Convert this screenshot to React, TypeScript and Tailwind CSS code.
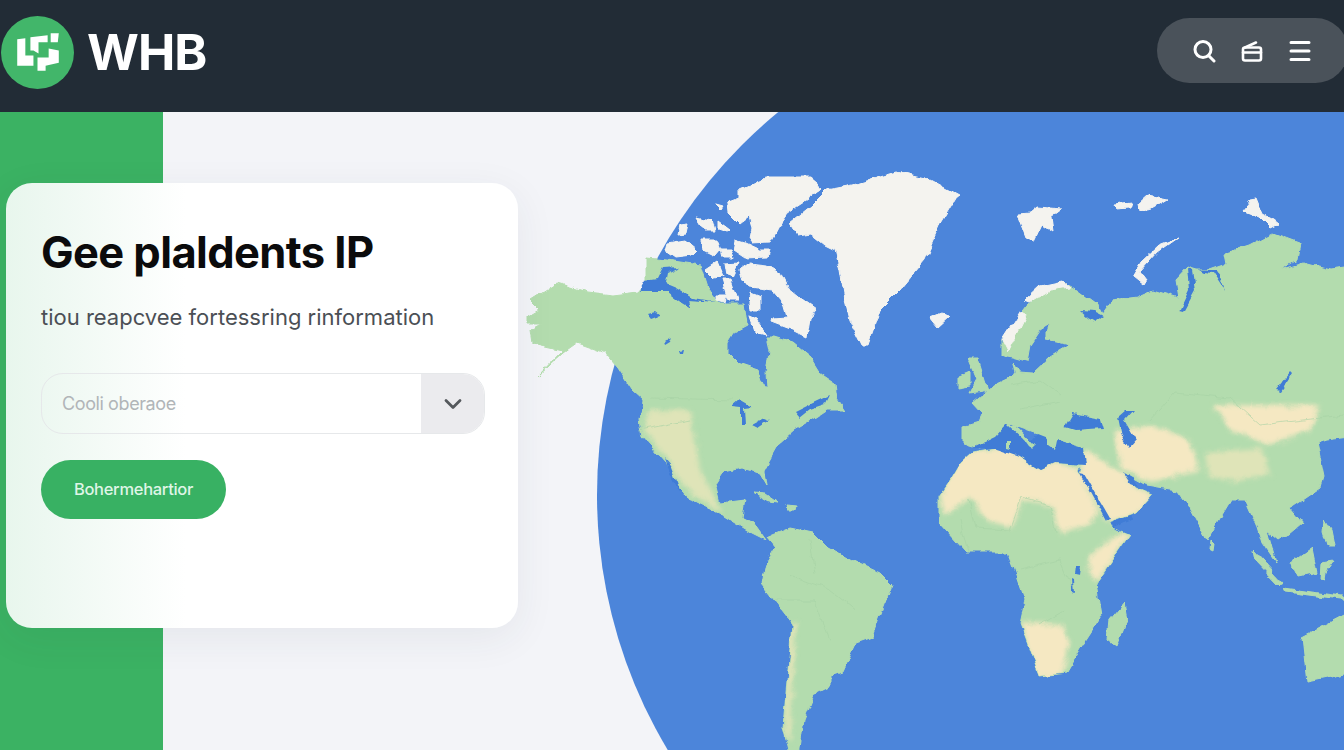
import { ChevronDown } from "lucide-react";

// map shapes use page coordinates, the svg viewBox starts at the hero top
const greenLand = [
  // north america
  "M530,300 L557,283 587,292 613,295 637,292 647,280 647,258 667,260 700,265 707,287 720,303 745,303 748,325 733,333 727,343 727,353 737,363 758,370 762,383 768,388 767,373 770,350 767,337 773,337 793,343 810,357 820,373 835,383 837,398 845,410 827,410 815,418 795,430 778,445 764,470 766,485 759,473 742,468 723,472 716,483 721,503 745,500 742,517 754,523 766,540 752,533 723,515 697,503 681,492 666,463 643,437 640,420 643,400 632,390 617,367 605,353 577,343 563,353 537,377 563,350 532,343 530,330 543,323 528,323 528,317 540,310 Z",
  // eurasia
  "M1002,340 L1027,307 1040,292 1063,282 1077,290 1100,307 1103,313 1112,300 1137,297 1153,290 1178,298 1175,280 1187,267 1197,270 1207,270 1227,263 1225,253 1250,245 1273,233 1300,243 1297,260 1280,270 1303,263 1330,270 1350,267 1350,437 1326,440 1317,443 1324,477 1321,487 1302,500 1290,508 1302,523 1290,533 1279,540 1267,530 1276,563 1262,543 1257,527 1245,500 1231,500 1207,540 1189,507 1177,490 1146,485 1122,472 1136,488 1153,495 1136,513 1108,523 1079,475 1084,450 1063,448 1037,433 1008,423 994,438 980,448 963,443 963,427 980,422 982,413 972,402 993,385 1010,377 1015,373 1013,363 1018,372 1033,373 1050,357 1070,345 1047,340 1047,333 1052,317 1060,318 1040,330 1030,345 1027,362 1013,358 1007,357 1002,355 Z",
  // africa
  "M973,452 L994,448 1013,448 1020,457 1041,470 1056,463 1084,465 1077,470 1110,527 1129,535 1096,583 1101,617 1084,643 1067,672 1039,675 1020,623 1025,600 1015,570 1008,552 965,552 939,523 939,497 951,480 961,463 Z",
  // south america
  "M790,528 L814,533 828,547 852,560 880,573 892,585 880,617 873,637 856,643 842,673 830,677 830,687 814,695 804,720 799,755 790,755 783,727 792,623 761,583 764,567 776,547 768,537 Z",
  // uk and ireland
  "M968,358 L978,358 988,390 970,393 977,380 Z",
  "M958,377 L970,372 970,385 958,387 Z",
  // madagascar, australia, sri lanka
  "M1124,603 L1127,620 1117,647 1108,640 1110,620 Z",
  "M1350,612 L1302,637 1307,682 1350,673 Z",
  "M1210,540 L1214,544 1213,551 1209,549 Z",
  // indonesia and philippines
  "M1253,550 L1283,583 1279,585 1255,560 Z",
  "M1283,588 L1350,597 1350,600 1285,592 Z",
  "M1312,548 L1291,563 1298,577 1317,573 Z",
  "M1322,563 L1334,561 1326,572 1325,582 1321,580 Z",
  "M1325,520 L1331,530 1334,545 1328,545 1324,532 Z",
  // cuba and hispaniola
  "M754,493 L765,494 778,503 770,502 Z",
  "M785,504 L797,505 796,509 786,509 Z",
];

const whiteLand = [
  // greenland
  "M790,223 L810,207 827,190 853,185 897,172 930,180 958,195 940,225 925,260 900,290 880,310 868,345 862,345 850,320 845,300 840,270 835,250 825,245 810,233 797,235 Z",
  // canadian arctic
  "M740,190 L767,178 810,178 822,188 807,200 787,213 780,223 770,242 750,243 753,227 750,217 740,225 728,213 727,203 740,198 Z",
  "M697,217 L712,220 715,230 705,230 Z",
  "M718,221 L730,230 727,231 718,228 Z",
  "M715,205 L722,207 720,210 Z",
  "M680,225 L688,224 686,233 678,234 Z",
  "M667,243 L685,240 697,250 692,255 675,257 665,250 Z",
  "M702,240 L716,240 720,250 715,256 703,250 Z",
  "M720,250 L730,250 733,257 722,257 Z",
  "M735,240 L745,243 760,250 770,250 768,257 745,258 733,250 Z",
  "M740,270 L750,263 767,265 780,273 787,287 803,300 817,310 810,318 807,337 793,330 772,322 773,318 787,317 783,303 772,290 750,287 742,277 Z",
  "M705,270 L717,262 723,277 713,278 Z",
  "M725,263 L740,262 733,277 727,275 Z",
  "M722,280 L730,280 737,300 728,300 Z",
  "M750,317 L757,320 767,335 755,332 Z",
  "M717,295 L727,295 725,302 717,300 Z",
  "M750,293 L760,297 760,310 752,310 Z",
  // iceland
  "M930,318 L943,313 949,318 938,328 Z",
  // svalbard
  "M1018,214 L1030,213 1037,207 1062,209 1050,218 1052,232 1042,225 1035,240 1027,238 Z",
  // franz josef land
  "M1113,205 L1132,203 1130,209 1116,210 Z",
  "M1138,204 L1148,195 1168,199 1155,207 1148,211 1139,209 Z",
  // severnaya zemlya
  "M1250,199 L1256,198 1263,215 1273,220 1278,224 1270,228 1260,218 1241,210 Z",
  // novaya zemlya
  "M1178,238 L1160,245 1142,262 1133,277 1143,285 1146,280 1140,272 1158,252 Z",
  // north norway edge
  "M1025,300 L1040,286 1063,281 1070,287 1050,290 1030,302 Z",
  "M1002,340 L1020,312 1026,315 1008,352 Z",
];

const blueWater = [
  // arctic bays
  "M638,292 L645,280 658,278 663,268 680,267 667,273 665,283 677,288 693,298 717,302 688,300 690,308 680,302 667,292 Z",
  // canadian lakes
  "M648,314 L655,312 660,316 652,319 Z",
  "M664,342 L672,337 670,342 665,345 Z",
  "M678,352 L684,351 683,355 679,355 Z",
  // great lakes
  "M732,407 L740,400 752,407 744,408 745,425 741,425 741,408 Z",
  "M752,425 L765,418 770,420 758,428 Z",
  // gulf of st lawrence
  "M795,412 L815,402 830,395 825,405 810,410 800,418 Z",
  // baja
  "M664,458 L670,465 680,492 678,490 668,470 Z",
  // mediterranean
  "M973,448 L994,438 1008,423 1020,432 1027,445 1037,433 1050,438 1084,448 1086,465 1056,463 1041,470 1020,457 994,448 Z",
  // black sea and caspian
  "M1065,427 L1073,413 1100,418 1103,428 1075,430 Z",
  "M1118,417 L1126,410 1133,410 1124,420 1136,440 1129,448 1122,437 Z",
  // red sea and persian gulf
  "M1079,472 L1083,473 1110,520 1106,521 Z",
  "M1110,524 L1130,516 1132,520 1113,528 Z",
  "M1122,472 L1134,480 1138,487 1130,484 Z",
  // white sea and ob
  "M1080,311 L1095,312 1103,316 1095,322 1088,318 Z",
  "M1188,268 L1193,270 1196,290 1184,312 1180,311 1190,290 Z",
  "M1199,270 L1217,270 1224,290 1213,273 1203,272 Z",
  // baikal
  "M1290,372 L1292,374 1280,392 1275,391 Z",
  // east african lakes
  "M1076,567 L1081,567 1080,575 1075,574 Z",
  "M1071,579 L1073,580 1074,595 1072,594 Z",
];

// land drawn back on top of the mediterranean
const overWater = [
  "M1008,425 L1015,425 1035,446 1031,450 1024,440 Z",
  "M1046,431 L1058,436 1055,450 1048,445 Z",
  "M1007,440 L1011,440 1011,450 1007,449 Z",
];

const tanLand = [
  "M940,495 L960,458 973,450 1012,447 1020,455 1041,468 1056,462 1078,468 1098,512 1090,524 1060,533 1052,505 1024,500 1012,527 985,520 972,497 945,516 Z",
  "M1085,450 L1122,472 1136,487 1155,496 1136,515 1109,524 1080,472 Z",
  "M1020,622 L1060,625 1070,640 1062,675 1036,678 Z",
  "M1090,555 L1118,534 1130,534 1098,580 1088,574 Z",
  "M1113,432 L1150,425 1190,440 1200,470 1150,482 1122,468 Z",
  "M1213,405 L1320,406 1310,430 1270,445 1230,430 Z",
];

const paleLand = [
  "M1205,452 L1262,448 1270,475 1232,482 1208,475 Z",
  "M650,410 L690,410 700,470 722,512 697,497 680,482 665,455 644,432 Z",
  "M787,622 L796,622 790,740 784,735 Z",
];

const borders = [
  "M1022,497 L1050,505 1056,533 M975,528 L1010,530 1022,497 M968,500 L975,528 M1020,570 L1060,560 1072,590 M1040,625 L1065,610 M960,520 L968,552",
  "M790,575 L830,590 855,610 M775,600 L815,600 830,640 M810,540 L815,575",
  "M1010,385 L1040,380 1060,395 M1020,410 L1060,402 M1150,420 L1175,392 1230,398 1260,425 1344,415",
  "M650,398 L735,400 M640,430 L690,420",
];

function WorldMap() {
  return (
    <svg viewBox="0 112 1344 638" className="absolute inset-0 h-full w-full" aria-hidden="true">
      <defs>
        <filter id="soft" x="-20%" y="-20%" width="140%" height="140%">
          <feGaussianBlur stdDeviation="2.5" />
        </filter>
        {/* roughens the straight polygon edges into something like a coastline */}
        <filter id="coast" filterUnits="userSpaceOnUse" x="0" y="112" width="1344" height="638">
          <feTurbulence type="fractalNoise" baseFrequency="0.07" numOctaves="3" seed="4" result="noise" />
          <feDisplacementMap in="SourceGraphic" in2="noise" scale="7" xChannelSelector="R" yChannelSelector="G" />
          <feGaussianBlur stdDeviation="0.45" />
        </filter>
        <clipPath id="land">
          {greenLand.map((d) => (
            <path key={d} d={d} />
          ))}
        </clipPath>
      </defs>
      <circle cx="1092" cy="495" r="495" fill="#4c85da" />
      <g filter="url(#coast)">
        {greenLand.map((d) => (
          <path key={d} d={d} fill="#b3dcae" stroke="#b3dcae" strokeWidth="1" strokeLinejoin="round" />
        ))}
        <g clipPath="url(#land)">
          <g filter="url(#soft)" fill="#f5e8c2">
            {tanLand.map((d) => (
              <path key={d} d={d} />
            ))}
          </g>
          <g filter="url(#soft)" fill="#dfe4b8">
            {paleLand.map((d) => (
              <path key={d} d={d} />
            ))}
          </g>
        </g>
        {borders.map((d) => (
          <path key={d} d={d} fill="none" stroke="#a6d2a4" strokeWidth="0.6" />
        ))}
        {blueWater.map((d) => (
          <path key={d} d={d} fill="#3f7cd6" />
        ))}
        {overWater.map((d) => (
          <path key={d} d={d} fill="#b3dcae" />
        ))}
        {whiteLand.map((d) => (
          <path key={d} d={d} fill="#f4f3ef" stroke="#f4f3ef" strokeWidth="1" strokeLinejoin="round" />
        ))}
      </g>
    </svg>
  );
}

function Logo() {
  return (
    <svg viewBox="0 0 72 72" className="h-[73px] w-[73px]" aria-hidden="true">
      <circle cx="36" cy="36" r="36" fill="#42b66a" />
      <g fill="#fff" transform="translate(-1 -16)">
        <path d="M17,39 L25,38 25,55 33,55 33,65 17,65 Z" />
        <path d="M30,37 L47,35 47,42 38,42 38,53 33,50 30,50 Z" />
        <path d="M50,33 L58,33 57,42 50,42 Z" />
        <path d="M48,48 L58,50 58,62 45,65 45,70 37,70 37,57 48,57 Z" />
      </g>
    </svg>
  );
}

function NavIcons() {
  return (
    <div className="mb-[3px] mr-[-4px] flex h-[65px] w-[191px] items-center rounded-full bg-[#4a525a] pl-[35px]">
      <svg viewBox="0 0 24 24" className="h-6 w-6" fill="none" stroke="#fff" strokeWidth="3" strokeLinecap="round" aria-hidden="true">
        <circle cx="11" cy="10.5" r="8" />
        <path d="M17 17 L22 22" />
      </svg>
      <svg viewBox="0 0 24 24" className="ml-[24px] h-6 w-6" fill="none" stroke="#fff" strokeWidth="2.6" strokeLinejoin="round" strokeLinecap="round" aria-hidden="true">
        <rect x="3" y="8.5" width="18" height="13" rx="2" />
        <path d="M3 13.5 H21 M5 8.5 L16 3.5" />
      </svg>
      <svg viewBox="0 0 24 24" className="ml-[24px] h-6 w-6" fill="none" stroke="#fff" strokeWidth="3" strokeLinecap="round" aria-hidden="true">
        <path d="M3 3.5 H21 M3 12 H21 M3 20.5 H21" />
      </svg>
    </div>
  );
}

export default function App() {
  return (
    <div className="h-[750px] w-[1344px] overflow-hidden bg-[#f3f4f8] font-['Inter',sans-serif]">
      <header className="flex h-[112px] items-center justify-between bg-[#222c36] pb-[8px]">
        <div className="ml-[1px] flex items-center gap-[13px]">
          <Logo />
          <span className="text-[50px] font-bold leading-none tracking-[-1px] text-white">WHB</span>
        </div>
        <NavIcons />
      </header>

      <main className="relative h-[638px]">
        <div className="absolute inset-y-0 left-0 w-[163px] bg-[#3bb263]" />
        <WorldMap />
        <div className="relative ml-[6px] flex flex-col pt-[71px]">
          <section className="h-[445px] w-[512px] rounded-[26px] bg-linear-to-r from-[#e8f6ed] via-white via-35% to-white pl-[35px] pr-[33px] pt-[44px] shadow-[0_10px_40px_rgba(40,50,70,0.07)]">
            <h1 className="text-[43.5px] font-bold leading-[50px] tracking-[-0.6px] text-[#0b0b0c]">Gee plaldents IP</h1>
            <p className="mt-[25px] text-[22px] leading-[30px] text-[#4b4f55]">tiou reapcvee fortessring rinformation</p>
            <div className="mt-[41px] flex h-[61px] items-stretch overflow-hidden rounded-[22px] border border-[#e6e8ea]">
              <div className="flex flex-1 items-center pl-[20px] text-[18px] tracking-[-0.4px] text-[#b1b5b8]">Cooli oberaoe</div>
              <div className="flex w-[63px] items-center justify-center bg-[#ebebee]">
                <ChevronDown className="h-7 w-7 text-[#55595d]" strokeWidth={2.4} />
              </div>
            </div>
            <button className="mt-[26px] flex h-[59px] w-[185px] items-center justify-center rounded-full bg-[#38b163] text-[16.5px] font-medium tracking-[-0.3px] text-[#dff5e6]">
              Bohermehartior
            </button>
          </section>
        </div>
      </main>
    </div>
  );
}
